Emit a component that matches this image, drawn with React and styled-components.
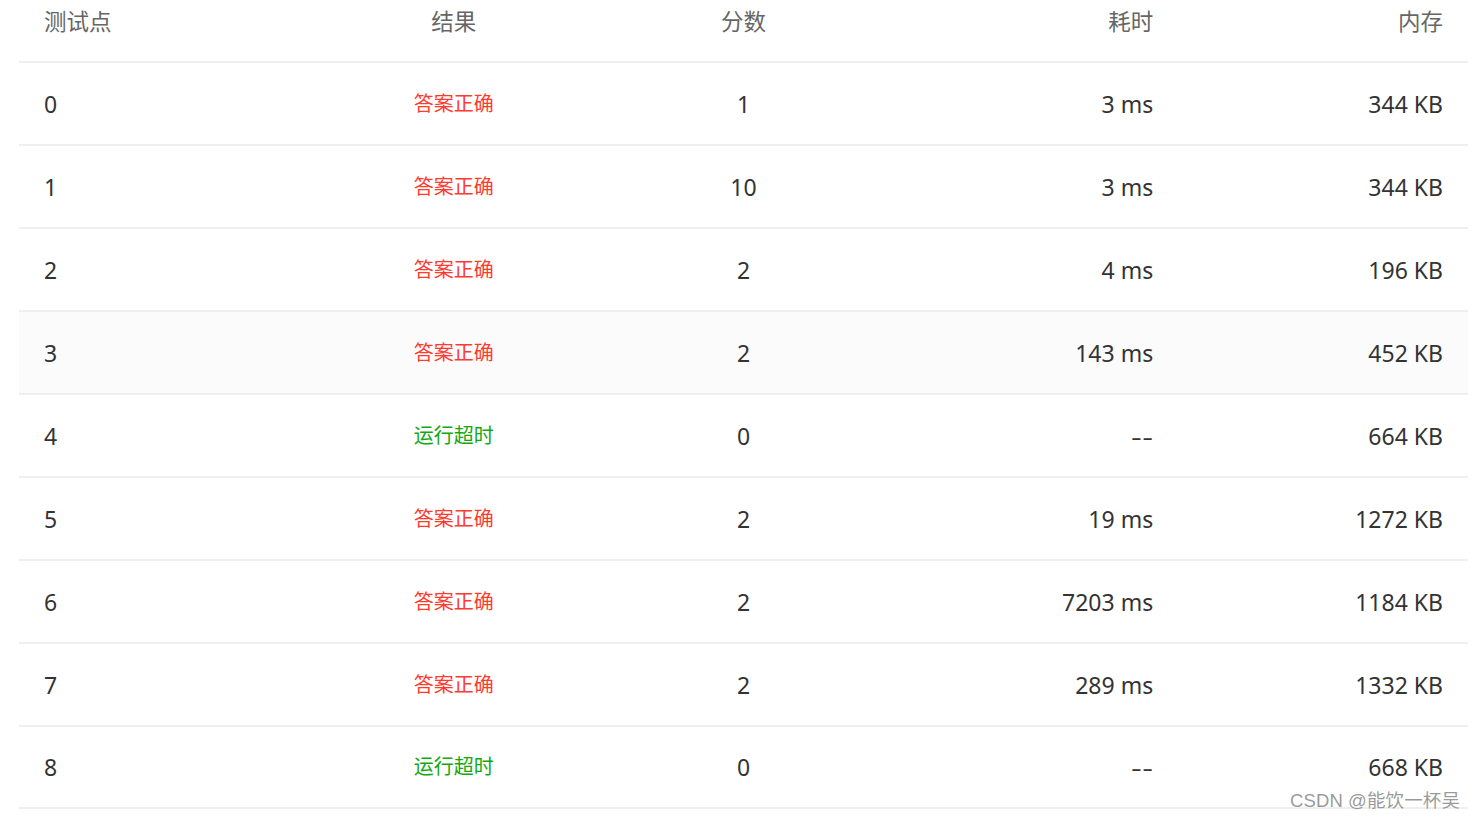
import React from "react";
import styled, { createGlobalStyle } from "styled-components";

const Global = createGlobalStyle`
  html, body { margin: 0; padding: 0; background: #fff; }
  body { font-family: "Noto Sans", "Noto Sans CJK SC", sans-serif; overflow: hidden; }
`;

const Page = styled.div`
  position: relative;
  width: 1476px;
  height: 820px;
  overflow: hidden;
  background: #fff;
`;

const Table = styled.div`
  margin-left: 19px;
  width: 1449px;
  display: flex;
  flex-direction: column;
`;

const Row = styled.div`
  display: grid;
  grid-template-columns: repeat(5, 1fr);
  height: ${(p) => (p.$head ? "61px" : "80.95px")};
  border-bottom: 2px solid #efefef;
  background: ${(p) => (p.$hover ? "#fbfbfc" : "#fff")};
  align-items: ${(p) => (p.$head ? "start" : "center")};
`;

const Cell = styled.div`
  padding: 0 25px;
  text-align: ${(p) => p.$align || "left"};
  font-size: ${(p) => (p.$head ? "22.5px" : "23px")};
  color: ${(p) => (p.$head ? "#666" : "#333")};
  line-height: 1;
  padding-top: ${(p) => (p.$head ? "11px" : "2px")};
  white-space: nowrap;
`;

const Status = styled.span`
  font-size: 20px;
  color: ${(p) => (p.$ok ? "#ff3b30" : "#12a812")};
  position: relative;
  top: -2px;
`;

const Dash = styled.span`
  display: inline-block;
  letter-spacing: 0.5px;
  margin-right: -0.5px;
  transform: scaleX(1.45);
  transform-origin: right center;
`;

const Watermark = styled.div`
  position: absolute;
  right: 16px;
  bottom: 8px;
  font-size: 18.5px;
  color: rgba(120, 120, 120, 0.75);
  font-family: "Liberation Sans", "Noto Sans CJK SC", sans-serif;
  text-shadow: 0 0 2px #fff;
  letter-spacing: 0.1px;
`;

const rows = [
  ["0", true, "1", "3 ms", "344 KB"],
  ["1", true, "10", "3 ms", "344 KB"],
  ["2", true, "2", "4 ms", "196 KB"],
  ["3", true, "2", "143 ms", "452 KB"],
  ["4", false, "0", "--", "664 KB"],
  ["5", true, "2", "19 ms", "1272 KB"],
  ["6", true, "2", "7203 ms", "1184 KB"],
  ["7", true, "2", "289 ms", "1332 KB"],
  ["8", false, "0", "--", "668 KB"],
];

export default function App() {
  return (
    <Page>
      <Global />
      <Table>
        <Row $head>
          <Cell $head>测试点</Cell>
          <Cell $head $align="center">结果</Cell>
          <Cell $head $align="center">分数</Cell>
          <Cell $head $align="right">耗时</Cell>
          <Cell $head $align="right">内存</Cell>
        </Row>
        {rows.map((r, i) => (
          <Row key={i} $hover={i === 3}>
            <Cell>{r[0]}</Cell>
            <Cell $align="center">
              <Status $ok={r[1]}>{r[1] ? "答案正确" : "运行超时"}</Status>
            </Cell>
            <Cell $align="center">{r[2]}</Cell>
            <Cell $align="right">{r[3] === "--" ? <Dash>--</Dash> : r[3]}</Cell>
            <Cell $align="right">{r[4]}</Cell>
          </Row>
        ))}
      </Table>
      <Watermark>CSDN @能饮一杯吴</Watermark>
    </Page>
  );
}
